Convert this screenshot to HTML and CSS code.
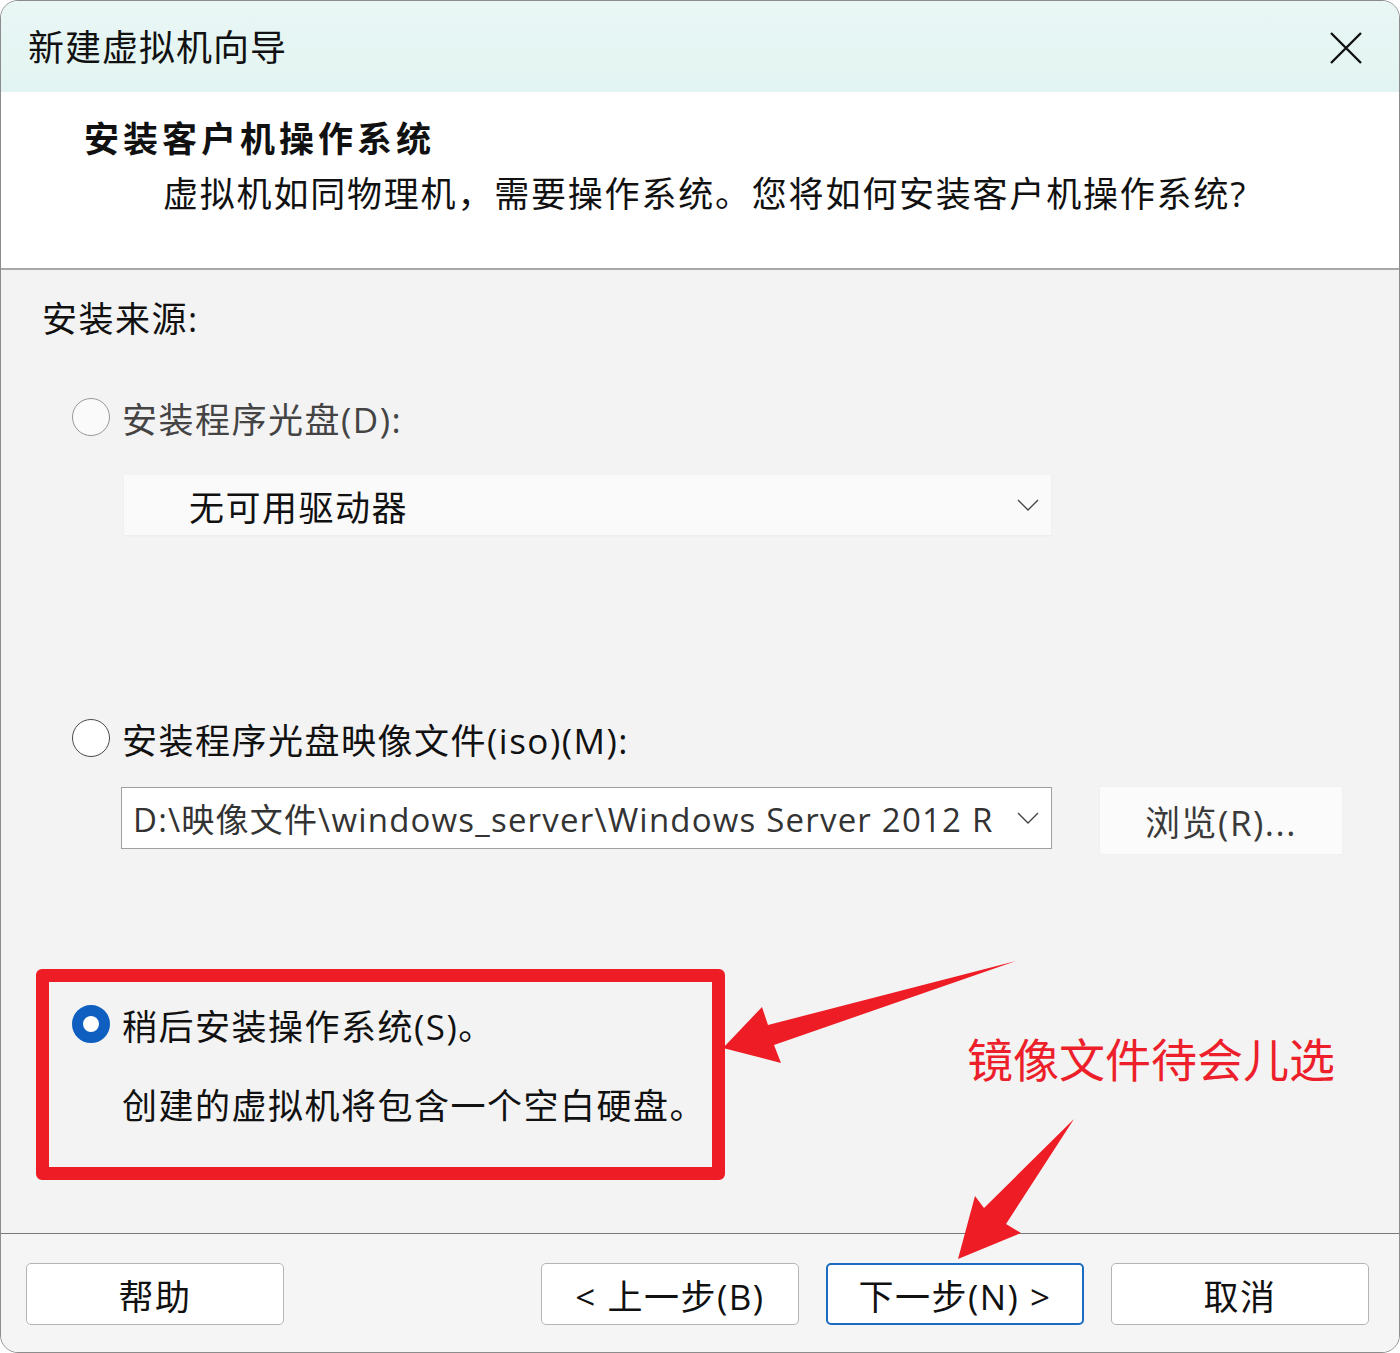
FILE: index.html
```html
<!DOCTYPE html>
<html lang="zh-CN">
<head>
    <meta charset="UTF-8">
    <meta name="viewport" content="width=device-width, initial-scale=1.0">
    <title>新建虚拟机向导</title>
    <link rel="stylesheet" href="styles.css">
</head>
<body>
    <div class="dialog">
        <div class="titlebar">
            <span class="title">新建虚拟机向导</span>
            <button class="close" aria-label="关闭">
                <svg width="32" height="32" viewBox="0 0 32 32">
                    <path d="M1 1 L31 31 M31 1 L1 31" stroke="#111" stroke-width="2.4" fill="none"/>
                </svg>
            </button>
        </div>

        <div class="header">
            <h1>安装客户机操作系统</h1>
            <p>虚拟机如同物理机，需要操作系统。您将如何安装客户机操作系统?</p>
        </div>

        <div class="content">
            <div class="section-label">安装来源:</div>

            <div class="radio-row disabled">
                <span class="radio"></span>
                <span>安装程序光盘(D):</span>
            </div>
            <div class="select select-drive">
                <span>无可用驱动器</span>
                <svg class="chevron" width="22" height="12" viewBox="0 0 22 12">
                    <path d="M1 1 L11 11 L21 1" stroke="#444" stroke-width="1.4" fill="none"/>
                </svg>
            </div>

            <div class="radio-row">
                <span class="radio"></span>
                <span>安装程序光盘映像文件(iso)(M):</span>
            </div>
            <div class="iso-row">
                <div class="select select-iso">
                    <span>D:\映像文件\windows_server\Windows Server 2012 R</span>
                    <svg class="chevron" width="22" height="12" viewBox="0 0 22 12">
                        <path d="M1 1 L11 11 L21 1" stroke="#444" stroke-width="1.4" fill="none"/>
                    </svg>
                </div>
                <button class="browse">浏览(R)...</button>
            </div>

            <div class="highlight">
                <div class="radio-row">
                    <span class="radio checked"></span>
                    <span>稍后安装操作系统(S)。</span>
                </div>
                <div class="hint">创建的虚拟机将包含一个空白硬盘。</div>
            </div>
        </div>

        <div class="footer">
            <button class="btn btn-help">帮助</button>
            <button class="btn btn-back">&lt; 上一步(B)</button>
            <button class="btn btn-next">下一步(N) &gt;</button>
            <button class="btn btn-cancel">取消</button>
        </div>

        <!-- 标注箭头 -->
        <svg class="annotations" width="1400" height="1353" viewBox="0 0 1400 1353">
            <polygon points="1016,961 768,1025 762,1007 723,1048 781,1063 774,1045" fill="#ee1c25"/>
            <polygon points="1074,1119 984,1208 975,1196 958,1259 1021,1233 1006,1224" fill="#ee1c25"/>
        </svg>
        <div class="note">镜像文件待会儿选</div>
    </div>
</body>
</html>
```

FILE: styles.css
```css
body {
    margin: 0;
    background: #fff;
    font-family: "Open Sans", "Noto Sans CJK SC", sans-serif;
    color: #111;
}
.dialog {
    position: relative;
    box-sizing: border-box;
    width: 1400px;
    height: 1353px;
    display: flex;
    flex-direction: column;
    border: 1px solid #8c8c8c;
    border-radius: 18px;
    overflow: hidden;
    background: #f3f3f3;
}
.titlebar {
    height: 91px;
    flex-shrink: 0;
    display: flex;
    align-items: center;
    justify-content: space-between;
    padding: 0 37px 0 27px;
    background: linear-gradient(180deg, #e9f7f5, #e2f4f1);
}
.title {
    font-size: 36px;
    letter-spacing: 1px;
    line-height: 46px;
    margin-top: 2px;
}
.close {
    border: none;
    background: none;
    padding: 0;
    width: 32px;
    height: 32px;
    margin-top: 2px;
}
.close svg {
    display: block;
}
.header {
    height: 178px;
    flex-shrink: 0;
    box-sizing: border-box;
    background: #fff;
    border-bottom: 2px solid #a8a8a8;
    padding-top: 24px;
}
.header h1 {
    margin: 0 0 0 83px;
    font-size: 35px;
    font-weight: bold;
    letter-spacing: 4px;
    line-height: 46px;
}
.header p {
    margin: 9px 0 0 162px;
    font-size: 35px;
    letter-spacing: 1.8px;
    line-height: 46px;
}
.content {
    flex: 1;
    display: flex;
    flex-direction: column;
    align-items: flex-start;
    padding: 24px 0 0 41px;
    border-bottom: 1px solid #7a7a7a;
    font-size: 35px;
    letter-spacing: 1.5px;
}
.section-label {
    line-height: 50px;
}
.radio-row {
    display: flex;
    align-items: center;
    height: 50px;
    margin-left: 30px;
    gap: 12px;
}
.radio-row.disabled {
    margin-top: 48px;
    color: #444;
}
.radio {
    box-sizing: border-box;
    width: 38px;
    height: 38px;
    border-radius: 50%;
    border: 1.5px solid #4a4a4a;
    background: #fff;
    flex-shrink: 0;
}
.disabled .radio {
    border-color: #9a9a9a;
    background: #fafafa;
}
.radio.checked {
    border: 11px solid #0f5fc0;
    background: #fff;
}
.select {
    box-sizing: border-box;
    display: flex;
    align-items: center;
    justify-content: space-between;
    padding-right: 12px;
}
.select-drive {
    width: 927px;
    height: 60px;
    margin: 33px 0 0 82px;
    padding-left: 65px;
    background: #fafafa;
    box-shadow: 0 1px 2px rgba(0, 0, 0, 0.04);
}
.select-drive + .radio-row {
    margin-top: 178px;
}
.iso-row {
    display: flex;
    align-items: flex-start;
    margin: 23px 0 0 79px;
}
.select-iso {
    width: 931px;
    height: 62px;
    margin-top: 1px;
    padding-left: 11px;
    background: #fff;
    border: 1px solid #a0a0a0;
    color: #333;
    font-size: 33px;
    letter-spacing: 1.2px;
    white-space: nowrap;
}
.browse {
    width: 244px;
    height: 69px;
    margin-left: 47px;
    background: #fbfbfb;
    border: 1px solid #f0f0f0;
    font-family: inherit;
    font-size: 35px;
    letter-spacing: 1.5px;
    color: #3a3a3a;
}
.highlight {
    box-sizing: border-box;
    width: 689px;
    height: 211px;
    margin: 114px 0 0 -6px;
    padding: 17px 0 0 23px;
    border: 13px solid #ee1c25;
    border-radius: 6px;
}
.highlight .radio-row {
    margin-left: 0;
}
.hint {
    margin: 32px 0 0 50px;
    line-height: 50px;
}
.footer {
    height: 118px;
    flex-shrink: 0;
    box-sizing: border-box;
    display: flex;
    align-items: flex-start;
    padding: 29px 0 0 25px;
    background: #f5f5f5;
}
.btn {
    width: 258px;
    height: 62px;
    background: #fff;
    border: 1px solid #b5b5b5;
    border-radius: 5px;
    font-family: inherit;
    font-size: 35px;
    letter-spacing: 1.5px;
    color: #111;
    padding: 0;
}
.btn-back {
    margin-left: 257px;
}
.btn-next {
    margin-left: 27px;
    border: 2px solid #1a6cc0;
}
.btn-cancel {
    margin-left: 27px;
}
.annotations {
    position: absolute;
    left: -1px;
    top: -1px;
    pointer-events: none;
}
.note {
    position: absolute;
    left: 966px;
    top: 1028px;
    font-family: "Noto Sans CJK SC", sans-serif;
    font-size: 46px;
    line-height: 56px;
    color: #ec1f2a;
}
```
